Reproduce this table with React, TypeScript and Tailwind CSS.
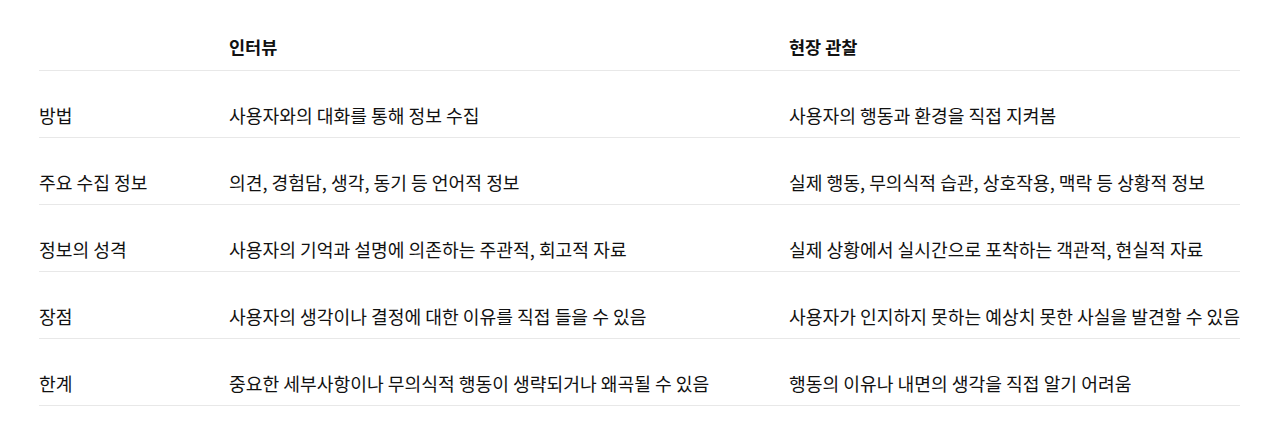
const rows = [
  ["방법", "사용자와의 대화를 통해 정보 수집", "사용자의 행동과 환경을 직접 지켜봄"],
  ["주요 수집 정보", "의견, 경험담, 생각, 동기 등 언어적 정보", "실제 행동, 무의식적 습관, 상호작용, 맥락 등 상황적 정보"],
  ["정보의 성격", "사용자의 기억과 설명에 의존하는 주관적, 회고적 자료", "실제 상황에서 실시간으로 포착하는 객관적, 현실적 자료"],
  ["장점", "사용자의 생각이나 결정에 대한 이유를 직접 들을 수 있음", "사용자가 인지하지 못하는 예상치 못한 사실을 발견할 수 있음"],
  ["한계", "중요한 세부사항이나 무의식적 행동이 생략되거나 왜곡될 수 있음", "행동의 이유나 내면의 생각을 직접 알기 어려움"],
];

export default function App() {
  return (
    <div className="bg-white w-[1280px] h-[433px] pl-[39px] pr-[40px] pt-[4px] text-[18.2px] text-[#111111] font-['Noto_Sans_CJK_KR','Noto_Sans',sans-serif]">
      {/* header */}
      <div className="grid grid-cols-[190px_560px_1fr] h-[67px] items-end pb-[11px] border-b border-[#e8e8e8] font-bold text-[17.5px]">
        <div></div>
        <div className="leading-6">인터뷰</div>
        <div className="leading-6">현장 관찰</div>
      </div>
      {rows.map((r) => (
        <div key={r[0]} className="grid grid-cols-[190px_560px_1fr] h-[67px] items-end pb-[10px] border-b border-[#e8e8e8]">
          <div className="leading-6">{r[0]}</div>
          <div className="leading-6">{r[1]}</div>
          <div className="leading-6 whitespace-nowrap">{r[2]}</div>
        </div>
      ))}
    </div>
  );
}
